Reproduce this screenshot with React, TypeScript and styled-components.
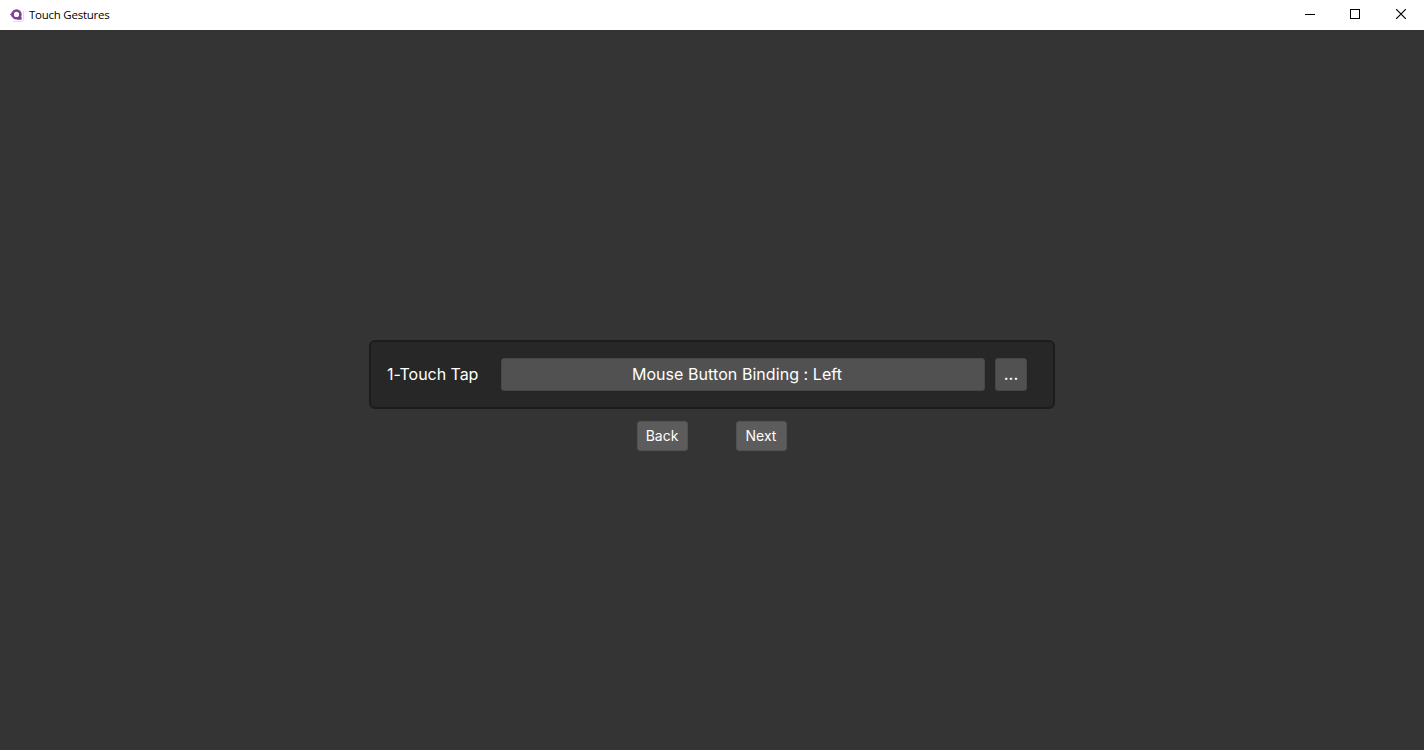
import React from "react";
import styled, { createGlobalStyle } from "styled-components";

const GlobalStyle = createGlobalStyle`
  * { box-sizing: border-box; }
  body { margin: 0; background: #343434; overflow: hidden; }
`;

const Window = styled.div`
  display: flex;
  flex-direction: column;
  height: 100vh;
  font-family: Inter, sans-serif;
  color: #ffffff;
`;

const TitleBar = styled.header`
  display: flex;
  align-items: center;
  flex: 0 0 30px;
  padding-left: 9px;
  background: #ffffff;
  color: #000000;
`;

const Title = styled.h1`
  flex: 1;
  margin: 0 0 0 4px;
  font: 400 11.5px/16px "Open Sans", "Noto Sans", sans-serif;
  letter-spacing: -0.25px;
`;

const Caption = styled.div`
  display: flex;
`;

const CaptionButton = styled.button<{ $width: number }>`
  display: flex;
  align-items: center;
  justify-content: center;
  width: ${({ $width }) => $width}px;
  height: 30px;
  padding: 0 0 2px;
  border: 0;
  background: none;
  color: #000000;
`;

const Content = styled.main`
  display: flex;
  flex: 1;
  flex-direction: column;
  align-items: center;
  padding-top: 310px;
  background: #343434;
`;

const BindingPanel = styled.section`
  display: flex;
  align-items: center;
  width: 686px;
  height: 69px;
  padding: 0 26px 0 16px;
  border: 2px solid #1c1c1c;
  border-radius: 6px;
  background: #272727;
  font-size: 16px;
`;

const Label = styled.span`
  width: 114px;
  padding-bottom: 2px;
  line-height: 20px;
  letter-spacing: -0.05px;
`;

const Button = styled.button<{ $kind: "field" | "more" | "nav" }>`
  display: flex;
  align-items: center;
  justify-content: center;
  flex: ${({ $kind }) => ($kind === "field" ? "1" : "none")};
  width: ${({ $kind }) => ($kind === "more" ? "32px" : $kind === "nav" ? "51px" : "auto")};
  height: ${({ $kind }) => ($kind === "nav" ? "30px" : "33px")};
  margin-left: ${({ $kind }) => ($kind === "more" ? "10px" : "0")};
  padding: ${({ $kind }) => ($kind === "field" ? "0 12px 2px 0" : $kind === "nav" ? "0 1px 1px 0" : "0 0 2px")};
  border: 1px solid ${({ $kind }) => ($kind === "nav" ? "#515151" : "#474747")};
  border-radius: 3px;
  background: ${({ $kind }) => ($kind === "nav" ? "#5c5c5c" : "#515151")};
  color: #ffffff;
  font: ${({ $kind }) => ($kind === "more" ? 500 : 400)} ${({ $kind }) => ($kind === "nav" ? "14px" : "16px")} Inter, sans-serif;
  letter-spacing: ${({ $kind }) => ($kind === "field" ? "0.06px" : "0")};
`;

const Navigation = styled.nav`
  display: flex;
  gap: 48px;
  margin-top: 12px;
`;

export default function App() {
  return (
    <Window>
      <GlobalStyle />
      <TitleBar>
        <svg width="16" height="16" viewBox="0 0 16 16" fill="none">
          <path d="M4 14.5h8q2.5 0 2.5-2.5V4" stroke="#dedede" />
          <path d="M.8 7.5 3.4 5v5z" fill="#9a68b4" />
          <circle cx="7.5" cy="7.4" r="3.9" stroke="#7c419b" strokeWidth="2.6" />
          <path d="M9 10h3.6v2.8H8z" fill="#7c419b" />
        </svg>
        <Title>Touch Gestures</Title>
        <Caption>
          <CaptionButton $width={44} aria-label="Minimize">
            <svg width="10" height="10" shapeRendering="crispEdges"><path d="M0 5.5h10" stroke="currentColor" /></svg>
          </CaptionButton>
          <CaptionButton $width={46} aria-label="Maximize">
            <svg width="10" height="10" shapeRendering="crispEdges"><path d="M.5.5h9v9h-9z" fill="none" stroke="currentColor" /></svg>
          </CaptionButton>
          <CaptionButton $width={46} aria-label="Close">
            <svg width="10" height="10"><path d="M0 0l10 10M10 0L0 10" stroke="currentColor" strokeWidth="1.2" /></svg>
          </CaptionButton>
        </Caption>
      </TitleBar>
      <Content>
        <BindingPanel>
          <Label>1-Touch Tap</Label>
          <Button $kind="field">Mouse Button Binding : Left</Button>
          <Button $kind="more">...</Button>
        </BindingPanel>
        <Navigation>
          <Button $kind="nav">Back</Button>
          <Button $kind="nav">Next</Button>
        </Navigation>
      </Content>
    </Window>
  );
}
